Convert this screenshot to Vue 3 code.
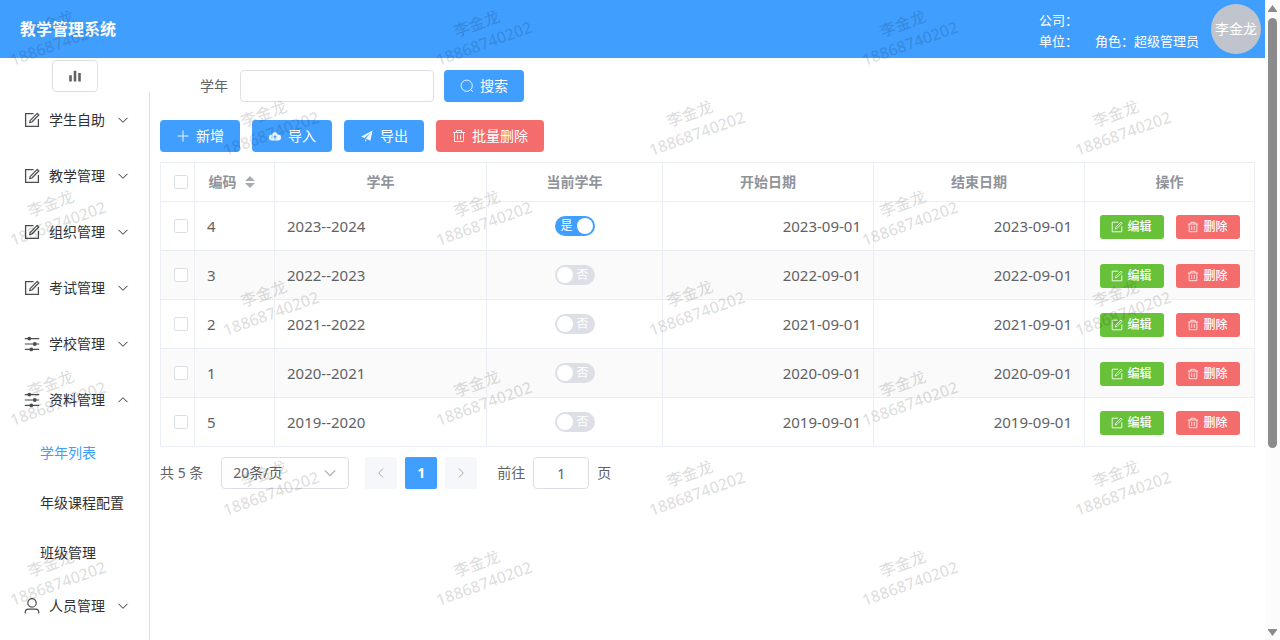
<script setup>
import { ref, reactive } from 'vue'

const menus = [
  { title: '学生自助', icon: 'edit' },
  { title: '教学管理', icon: 'edit' },
  { title: '组织管理', icon: 'edit' },
  { title: '考试管理', icon: 'edit' },
  { title: '学校管理', icon: 'operation' },
  { title: '资料管理', icon: 'operation', children: ['学年列表', '年级课程配置', '班级管理'] },
  { title: '人员管理', icon: 'user' }
]
const active = ref('学年列表')
const keyword = ref('')
const pageNo = ref('1')

const rows = reactive([
  { code: 4, name: '2023--2024', current: true, start: '2023-09-01', end: '2023-09-01' },
  { code: 3, name: '2022--2023', current: false, start: '2022-09-01', end: '2022-09-01' },
  { code: 2, name: '2021--2022', current: false, start: '2021-09-01', end: '2021-09-01' },
  { code: 1, name: '2020--2021', current: false, start: '2020-09-01', end: '2020-09-01' },
  { code: 5, name: '2019--2020', current: false, start: '2019-09-01', end: '2019-09-01' }
])

const marks = []
for (let r = 0; r < 4; r++) {
  for (let c = 0; c < 3; c++) {
    marks.push({ x: 60 + c * 426, y: 49 + r * 180 })
    if (r < 3) marks.push({ x: 273 + c * 426, y: 139 + r * 180 })
  }
}
</script>

<template>
  <div class="shell">
    <svg class="defs" aria-hidden="true">
      <symbol id="i-edit" viewBox="0 0 16 16">
        <path d="M9.500 1.600H1.600v12.800h12.800V7" fill="none" stroke="currentColor" stroke-width="1.300" />
        <path d="M13.200 1.400l1.600 1.600-6.900 7-2.300.7.700-2.300z" fill="none" stroke="currentColor" stroke-width="1.200" stroke-linejoin="round" />
      </symbol>
      <symbol id="i-operation" viewBox="0 0 16 16">
        <path d="M.8 2.600h14.400M.8 8h14.400M.8 13.400h14.400" stroke="currentColor" stroke-width="1.200" />
        <circle cx="5.300" cy="2.600" r="1.900" fill="currentColor" />
        <circle cx="10.800" cy="8" r="1.900" fill="currentColor" />
        <circle cx="7.300" cy="13.400" r="1.900" fill="currentColor" />
      </symbol>
      <symbol id="i-user" viewBox="0 0 16 16">
        <circle cx="8" cy="4.900" r="4.200" fill="none" stroke="currentColor" stroke-width="1.200" />
        <path d="M1.200 15.600v-1.200c0-2 1.300-3.300 3.300-3.300h7c2 0 3.300 1.300 3.300 3.300v1.200" fill="none" stroke="currentColor" stroke-width="1.200" />
      </symbol>
      <symbol id="i-down" viewBox="0 0 12 12">
        <path d="M1.500 3.800L6 8.300l4.500-4.500" fill="none" stroke="currentColor" stroke-width="1" />
      </symbol>
      <symbol id="i-data" viewBox="0 0 16 16">
        <path d="M2.200 7.300h2.600v6.200H2.200zM6.700 2.700h2.600v10.800H6.700zM11.200 5h2.600v8.500h-2.600z" fill="currentColor" />
      </symbol>
      <symbol id="i-search" viewBox="0 0 14 14">
        <circle cx="6.700" cy="6.700" r="5.600" fill="none" stroke="currentColor" />
        <path d="M10.800 10.800l2.200 2" stroke="currentColor" />
      </symbol>
      <symbol id="i-plus" viewBox="0 0 14 14">
        <path d="M7 1.500v11M1.500 7h11" stroke="currentColor" />
      </symbol>
      <symbol id="i-upload" viewBox="0 0 14 14">
        <path fill-rule="evenodd" fill="currentColor" d="M4 5.600A3.100 3.100 0 0 1 10 5.600 3 3 0 0 1 10 11.600H4A3 3 0 0 1 4 5.600zM7 5.900L5 8.200h1.500v2.200h1V8.200H9z" />
      </symbol>
      <symbol id="i-plane" viewBox="0 0 14 14">
        <path fill="currentColor" d="M12.600 1.400L1.200 7.600l3.200 1.400 5.900-5-4.500 5.600 4.600 2.100zM5.200 10.200v2.700l1.500-2z" />
      </symbol>
      <symbol id="i-delete" viewBox="0 0 14 14">
        <path d="M1 3.500h12M2.500 3.500v9h9v-9M4.500 3.500v-2h5v2M5.500 5.700v4.800M8.500 5.700v4.800" fill="none" stroke="currentColor" />
      </symbol>
    </svg>

    <div class="page">
      <header class="top">
        <h1>教学管理系统</h1>
        <div class="info">
          <div><span class="unit">公司：</span></div>
          <div><span class="unit">单位：</span><span>角色：超级管理员</span></div>
        </div>
        <div class="avatar">李金龙</div>
      </header>

      <div class="body">
        <aside class="side">
          <button class="collapse" type="button" aria-label="菜单">
            <svg width="16" height="16"><use href="#i-data" /></svg>
          </button>
          <nav class="menu">
            <template v-for="m in menus" :key="m.title">
              <button class="item" type="button">
                <svg class="lead" width="16" height="16"><use :href="'#i-' + m.icon" /></svg>
                <span>{{ m.title }}</span>
                <svg class="arrow" :class="{ open: m.children }" width="12" height="12"><use href="#i-down" /></svg>
              </button>
              <a
                v-for="c in m.children"
                :key="c"
                class="sub"
                :class="{ active: c === active }"
                href="#"
                @click.prevent="active = c"
              >{{ c }}</a>
            </template>
          </nav>
        </aside>

        <main class="main">
          <form class="search" @submit.prevent>
            <label for="year">学年</label>
            <input id="year" v-model="keyword" class="box" type="text" />
            <button class="btn primary" type="submit"><svg width="14" height="14"><use href="#i-search" /></svg>搜索</button>
          </form>

          <div class="tools">
            <button class="btn primary" type="button"><svg width="14" height="14"><use href="#i-plus" /></svg>新增</button>
            <button class="btn primary" type="button"><svg width="14" height="14"><use href="#i-upload" /></svg>导入</button>
            <button class="btn primary" type="button"><svg width="14" height="14"><use href="#i-plane" /></svg>导出</button>
            <button class="btn danger" type="button"><svg width="14" height="14"><use href="#i-delete" /></svg>批量删除</button>
          </div>

          <table class="grid">
            <colgroup>
              <col class="c-check" /><col class="c-code" /><col class="c-name" /><col class="c-current" /><col /><col /><col class="c-ops" />
            </colgroup>
            <thead>
              <tr>
                <th class="check"><input type="checkbox" aria-label="全选" /></th>
                <th>
                  <span class="sortable">编码
                    <svg width="10" height="12" viewBox="0 0 10 12"><path d="M5 0l5 5H0zM0 7h10l-5 5z" fill="#a8abb2" /></svg>
                  </span>
                </th>
                <th>学年</th>
                <th>当前学年</th>
                <th>开始日期</th>
                <th>结束日期</th>
                <th>操作</th>
              </tr>
            </thead>
            <tbody>
              <tr v-for="r in rows" :key="r.code">
                <td class="check"><input type="checkbox" aria-label="选择" /></td>
                <td>{{ r.code }}</td>
                <td>{{ r.name }}</td>
                <td class="center">
                  <label class="switch" :class="{ on: r.current }">
                    <input v-model="r.current" type="checkbox" />
                    <span>{{ r.current ? '是' : '否' }}</span>
                    <i class="knob"></i>
                  </label>
                </td>
                <td class="right">{{ r.start }}</td>
                <td class="right">{{ r.end }}</td>
                <td class="ops">
                  <div>
                    <button class="btn mini success" type="button"><svg width="12" height="12"><use href="#i-edit" /></svg>编辑</button>
                    <button class="btn mini danger" type="button"><svg width="12" height="12"><use href="#i-delete" /></svg>删除</button>
                  </div>
                </td>
              </tr>
            </tbody>
          </table>

          <div class="pager">
            <span class="total">共 5 条</span>
            <div class="sizes">
              <select class="box" aria-label="每页条数"><option>20条/页</option></select>
              <svg width="14" height="14"><use href="#i-down" /></svg>
            </div>
            <button class="num prev" type="button" disabled aria-label="上一页"><svg width="12" height="12"><use href="#i-down" /></svg></button>
            <button class="num current" type="button">1</button>
            <button class="num next" type="button" disabled aria-label="下一页"><svg width="12" height="12"><use href="#i-down" /></svg></button>
            <label class="jump">前往<input v-model="pageNo" class="box" type="text" />页</label>
          </div>
        </main>
      </div>
    </div>

    <div class="scrollbar" aria-hidden="true">
      <svg width="9" height="7" viewBox="0 0 9 7"><path d="M4.500 0L9 6v1H0V6z" fill="#8b8b8b" /></svg>
      <div class="track"><div class="thumb"></div></div>
      <svg width="9" height="7" viewBox="0 0 9 7"><path d="M4.500 7L9 1V0H0v1z" fill="#8b8b8b" /></svg>
    </div>

    <svg class="watermark" aria-hidden="true">
      <g v-for="(m, i) in marks" :key="i" :transform="`translate(${m.x} ${m.y}) rotate(-20)`">
        <text text-anchor="middle" y="-21">李金龙</text>
        <text text-anchor="middle">18868740202</text>
      </g>
    </svg>
  </div>
</template>

<style>
body {
  background: #fff;
}
</style>

<style scoped>
.shell,
.shell * {
  box-sizing: border-box;
}
.shell {
  position: relative;
  display: flex;
  height: 100vh;
  overflow: hidden;
  font-family: "Noto Sans", "Noto Sans CJK SC", sans-serif;
  font-size: 14px;
  line-height: 20px;
  color: #606266;
}
button,
input,
select {
  margin: 0;
  font: inherit;
  color: inherit;
}
button {
  cursor: pointer;
}
svg {
  display: block;
  flex: none;
}
.defs {
  position: absolute;
  width: 0;
  height: 0;
}
.page {
  flex: 1;
  min-width: 0;
  display: flex;
  flex-direction: column;
}
.top {
  display: flex;
  align-items: center;
  height: 58px;
  flex: none;
  padding: 0 4px 0 20px;
  background: #409eff;
  color: #fff;
}
h1 {
  margin: 0;
  font-size: 16px;
  line-height: 24px;
  font-weight: 700;
}
.info {
  margin-left: auto;
  margin-top: 3px;
  font-size: 13px;
  line-height: 21px;
}
.unit {
  display: inline-block;
  width: 56px;
}
.avatar {
  width: 50px;
  height: 50px;
  margin-left: 12px;
  border-radius: 50%;
  background: #c0c4cc;
  line-height: 50px;
  text-align: center;
  white-space: nowrap;
}
.body {
  flex: 1;
  display: flex;
  min-height: 0;
}
.side {
  width: 150px;
  flex: none;
  display: flex;
  flex-direction: column;
  padding-top: 2px;
}
.collapse {
  align-self: center;
  display: flex;
  align-items: center;
  justify-content: center;
  width: 46px;
  height: 32px;
  flex: none;
  border: 1px solid #dcdfe6;
  border-radius: 4px;
  background: #fff;
}
.menu {
  flex: 1;
  border-right: 1px solid #dcdfe6;
  color: #303133;
}
.item {
  display: flex;
  align-items: center;
  width: 100%;
  height: 56px;
  padding: 0 20px 0 24px;
  border: 0;
  background: none;
}
.lead {
  margin-right: 9px;
  color: #4a4c50;
}
.arrow {
  margin-left: auto;
}
.arrow.open {
  transform: rotate(180deg);
}
.sub {
  display: block;
  padding-left: 40px;
  line-height: 50px;
  color: #303133;
  text-decoration: none;
}
.sub.active {
  color: #409eff;
}
.main {
  flex: 1;
  min-width: 0;
  padding: 12px 10px;
}
.search {
  display: flex;
  align-items: center;
}
.search label {
  width: 80px;
  padding-right: 12px;
  text-align: right;
}
.search .box {
  width: 194px;
  margin-right: 10px;
  padding: 0 15px;
}
.box {
  height: 32px;
  border: 1px solid #dcdfe6;
  border-radius: 4px;
  background: #fff;
  outline: none;
}
.tools {
  display: flex;
  gap: 12px;
  margin: 18px 0 10px;
}
.btn {
  display: flex;
  align-items: center;
  justify-content: center;
  gap: 6px;
  height: 32px;
  padding: 0 16px;
  border: 0;
  border-radius: 4px;
  color: #fff;
  white-space: nowrap;
}
.btn svg {
  opacity: 0.9;
}
.primary {
  background: #409eff;
}
.danger {
  background: #f56c6c;
}
.success {
  background: #67c23a;
}
.mini {
  gap: 4px;
  width: 64px;
  height: 24px;
  padding: 0;
  border-radius: 3px;
  font-size: 12px;
  font-weight: 500;
}
.grid {
  width: 100%;
  table-layout: fixed;
  border-spacing: 0;
  border-top: 1px solid #ebeef5;
  border-left: 1px solid #ebeef5;
}
.c-check {
  width: 34px;
}
.c-code {
  width: 80px;
}
.c-name {
  width: 212px;
}
.c-current {
  width: 176px;
}
.c-ops {
  width: 170px;
}
th,
td {
  padding: 0 12px;
  border-right: 1px solid #ebeef5;
  border-bottom: 1px solid #ebeef5;
}
th {
  height: 39px;
  color: #909399;
  font-weight: 700;
  text-align: center;
}
td {
  height: 49px;
  font-size: 15px;
}
tbody tr:nth-child(even) {
  background: #fafafa;
}
.check {
  padding: 0 0 0 13px;
  text-align: left;
}
.check input {
  display: block;
  appearance: none;
  width: 14px;
  height: 14px;
  border: 1px solid #dcdfe6;
  border-radius: 2px;
  background: #fff;
}
.check input:checked {
  border-color: #409eff;
  background: #409eff;
}
.sortable {
  display: flex;
  align-items: center;
  justify-content: center;
  gap: 8px;
  padding-right: 6px;
  white-space: nowrap;
}
.center {
  text-align: center;
}
.right {
  text-align: right;
}
.ops {
  padding: 1px 0 0;
}
.ops div {
  display: flex;
  justify-content: center;
  gap: 12px;
}
.switch {
  display: flex;
  flex-direction: row-reverse;
  align-items: center;
  justify-content: space-between;
  width: 40px;
  height: 20px;
  margin: 0 auto;
  padding: 0 6px 0 2px;
  border-radius: 10px;
  background: #dcdfe6;
  color: #fff;
  font-size: 12px;
  cursor: pointer;
}
.switch.on {
  flex-direction: row;
  padding: 0 2px 0 6px;
  background: #409eff;
}
.switch input {
  position: absolute;
  opacity: 0;
}
.knob {
  width: 16px;
  height: 16px;
  border-radius: 50%;
  background: #fff;
}
.pager {
  display: flex;
  align-items: center;
  gap: 8px;
  margin-top: 10px;
}
.sizes {
  position: relative;
  margin: 0 8px 0 10px;
}
.sizes select {
  display: block;
  appearance: none;
  width: 128px;
  padding: 0 30px 0 11px;
}
.sizes svg {
  position: absolute;
  right: 12px;
  top: 9px;
  color: #a8abb2;
  pointer-events: none;
}
.num {
  display: flex;
  align-items: center;
  justify-content: center;
  width: 32px;
  height: 32px;
  padding: 0;
  border: 0;
  border-radius: 2px;
  background: #f5f7fa;
  color: #a8abb2;
}
.num.current {
  background: #409eff;
  color: #fff;
  font-weight: 700;
}
.prev svg {
  transform: rotate(90deg);
}
.next svg {
  transform: rotate(-90deg);
}
.jump {
  display: flex;
  align-items: center;
  gap: 8px;
  margin-left: 12px;
}
.jump .box {
  width: 56px;
  padding: 0;
  text-align: center;
}
.scrollbar {
  display: flex;
  flex-direction: column;
  align-items: center;
  width: 15px;
  flex: none;
  padding: 5px 0 4px;
  background: #fcfcfc;
}
.track {
  flex: 1;
  padding: 6px 0;
}
.thumb {
  width: 9px;
  height: 71%;
  border-radius: 5px;
  background: #8b8b8b;
}
.watermark {
  position: absolute;
  inset: 0;
  width: 100%;
  height: 100%;
  pointer-events: none;
  font-size: 16px;
  font-weight: 500;
  fill: rgba(0, 0, 0, 0.14);
}
</style>
